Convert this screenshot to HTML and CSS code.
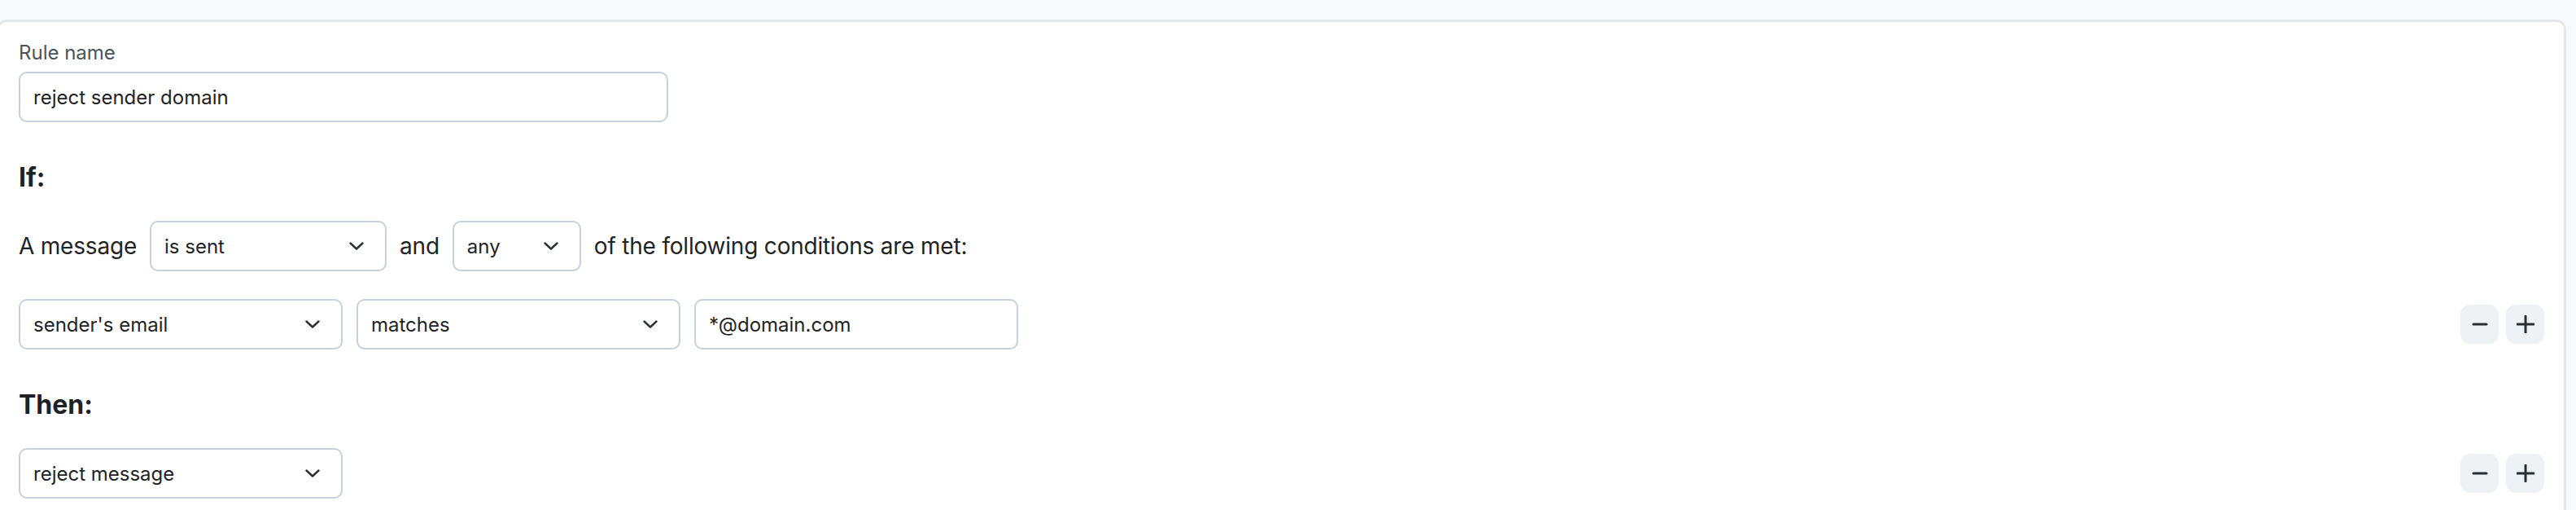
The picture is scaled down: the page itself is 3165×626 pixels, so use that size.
FILE: index.html
```html
<!DOCTYPE html>
<html lang="en">
<head>
<meta charset="utf-8">
<title>Rule editor</title>
<link rel="stylesheet" href="styles.css">
</head>
<body>
<div class="card">
  <div class="content">
    <div class="label">Rule name</div>
    <div class="field field-name">reject sender domain</div>

    <h2 class="heading heading-if">If:</h2>

    <div class="row row-sentence">
      <span class="text">A message</span>
      <div class="field select select-sent"><span>is sent</span>
        <svg class="chev" viewBox="0 0 18 10" width="18" height="10"><path d="M1.5 1.5 L9 8.5 L16.5 1.5" fill="none" stroke="#2b3033" stroke-width="2.4" stroke-linecap="round" stroke-linejoin="round"/></svg>
      </div>
      <span class="text">and</span>
      <div class="field select select-any"><span>any</span>
        <svg class="chev" viewBox="0 0 18 10" width="18" height="10"><path d="M1.5 1.5 L9 8.5 L16.5 1.5" fill="none" stroke="#2b3033" stroke-width="2.4" stroke-linecap="round" stroke-linejoin="round"/></svg>
      </div>
      <span class="text">of the following conditions are met:</span>
    </div>

    <div class="row row-cond">
      <div class="field select wide"><span>sender's email</span>
        <svg class="chev" viewBox="0 0 18 10" width="18" height="10"><path d="M1.5 1.5 L9 8.5 L16.5 1.5" fill="none" stroke="#2b3033" stroke-width="2.4" stroke-linecap="round" stroke-linejoin="round"/></svg>
      </div>
      <div class="field select wide"><span>matches</span>
        <svg class="chev" viewBox="0 0 18 10" width="18" height="10"><path d="M1.5 1.5 L9 8.5 L16.5 1.5" fill="none" stroke="#2b3033" stroke-width="2.4" stroke-linecap="round" stroke-linejoin="round"/></svg>
      </div>
      <div class="field wide">*@domain.com</div>
      <div class="btns">
        <button class="btn" aria-label="remove"><svg viewBox="0 0 22 22" width="22" height="22"><path d="M3 11 H19" stroke="#2a2f33" stroke-width="3" stroke-linecap="round"/></svg></button>
        <button class="btn" aria-label="add"><svg viewBox="0 0 22 22" width="22" height="22"><path d="M1 11 H21 M11 1 V21" stroke="#2a2f33" stroke-width="3" stroke-linecap="round"/></svg></button>
      </div>
    </div>

    <h2 class="heading heading-then">Then:</h2>

    <div class="row row-action">
      <div class="field select wide"><span>reject message</span>
        <svg class="chev" viewBox="0 0 18 10" width="18" height="10"><path d="M1.5 1.5 L9 8.5 L16.5 1.5" fill="none" stroke="#2b3033" stroke-width="2.4" stroke-linecap="round" stroke-linejoin="round"/></svg>
      </div>
      <div class="btns">
        <button class="btn" aria-label="remove"><svg viewBox="0 0 22 22" width="22" height="22"><path d="M3 11 H19" stroke="#2a2f33" stroke-width="3" stroke-linecap="round"/></svg></button>
        <button class="btn" aria-label="add"><svg viewBox="0 0 22 22" width="22" height="22"><path d="M1 11 H21 M11 1 V21" stroke="#2a2f33" stroke-width="3" stroke-linecap="round"/></svg></button>
      </div>
    </div>
  </div>
</div>
</body>
</html>
```

FILE: styles.css
```css
html, body {
  margin: 0;
  padding: 0;
}
body {
  background: #f7f9fa;
  font-family: Inter, "Noto Sans", "Liberation Sans", sans-serif;
  color: #1f2326;
  overflow: hidden;
}
.card {
  margin: 24px 12px 0 -4px;
  background: #ffffff;
  border: 3px solid #e2e8ec;
  border-radius: 12px;
  min-height: 640px;
  box-sizing: border-box;
}
.content {
  padding: 22px 24px 0 24px;
  display: flex;
  flex-direction: column;
  align-items: flex-start;
}
.label {
  font-size: 24px;
  line-height: 32px;
  color: #4b545a;
  margin-bottom: 7px;
}
.field {
  box-sizing: border-box;
  height: 62px;
  border: 2px solid #c6d1d9;
  border-radius: 10px;
  background: #fff;
  font-size: 24px;
  color: #1f2326;
  padding: 0 26px 0 16px;
  display: flex;
  align-items: center;
  white-space: nowrap;
}
.field-name {
  width: 798px;
}
.select {
  justify-content: space-between;
}
.chev {
  flex: none;
  display: block;
}
.select-sent { width: 291px; }
.select-any { width: 158px; }
.wide { width: 398px; }
.heading {
  margin: 48px 0 0 0;
  font-size: 32px;
  line-height: 40px;
  font-weight: 700;
  color: #1e2226;
}
.row {
  display: flex;
  align-items: center;
  align-self: stretch;
}
.row-sentence {
  margin-top: 33px;
  gap: 16px;
}
.text {
  font-size: 28px;
  line-height: 36px;
  letter-spacing: -0.2px;
}
.row-cond {
  margin-top: 34px;
  gap: 17px;
}
.row-action {
  margin-top: 33px;
}
.btns {
  margin-left: auto;
  display: flex;
  gap: 9px;
}
.btn {
  width: 47px;
  height: 48px;
  border: none;
  border-radius: 12px;
  background: #eef2f5;
  padding: 0;
  display: flex;
  align-items: center;
  justify-content: center;
}
.btn svg {
  display: block;
}
```
